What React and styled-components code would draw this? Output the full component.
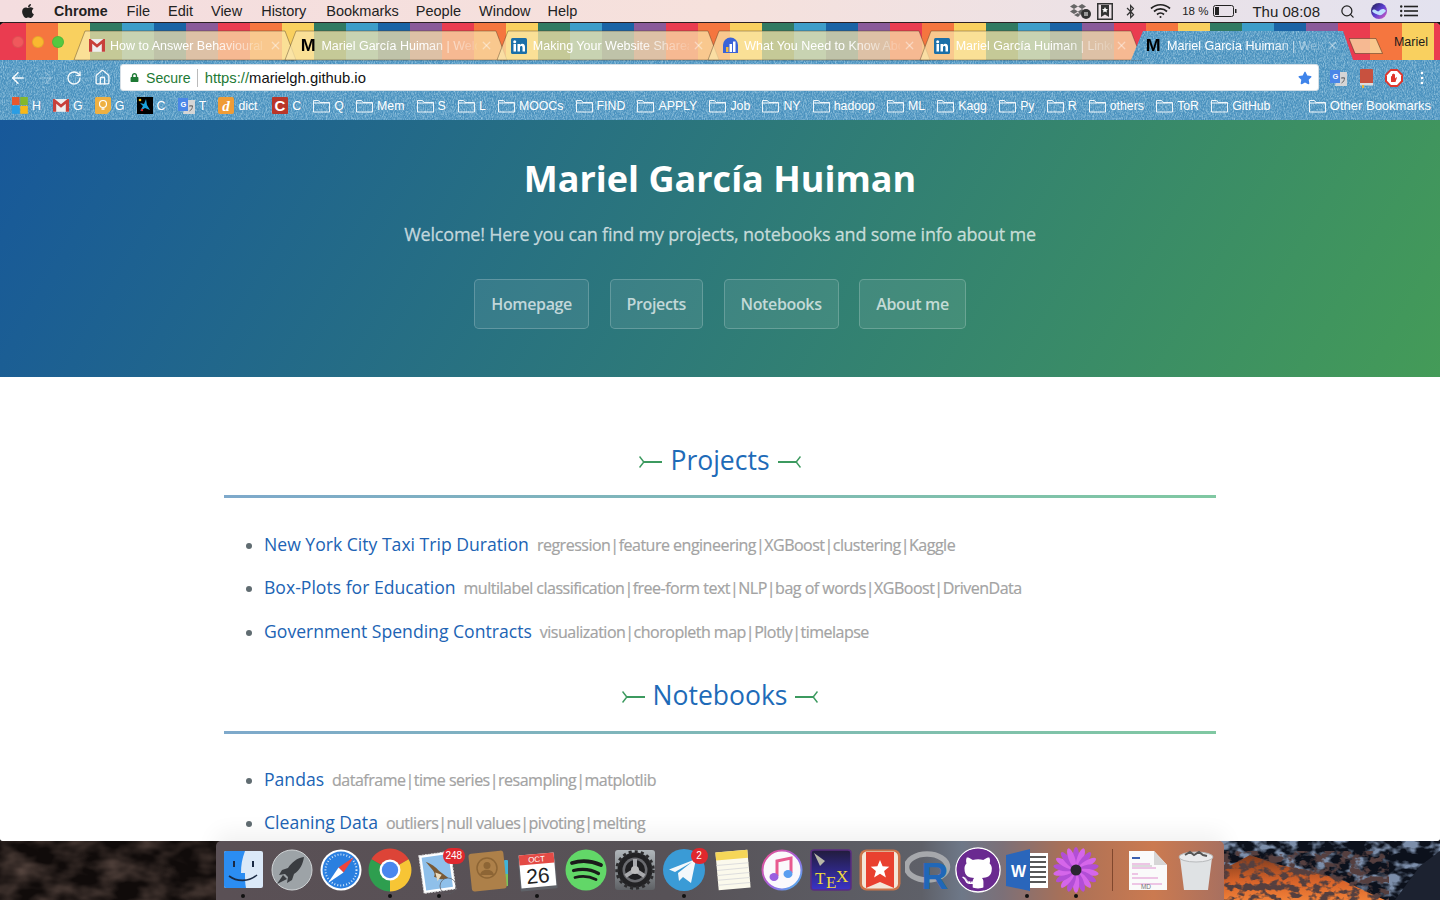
import React from "react";
import styled, { createGlobalStyle } from "styled-components";
import { FaApple, FaBluetoothB, FaGithub, FaStar, FaLock } from "react-icons/fa";
import { Search, ArrowLeft, ArrowRight, RotateCw, Home, X } from "lucide-react";

const denimSvg = `<svg xmlns='http://www.w3.org/2000/svg' width='500' height='200'><filter id='a' x='0' y='0' width='100%' height='100%'><feTurbulence type='fractalNoise' baseFrequency='1.1 .45' numOctaves='2' seed='4' stitchTiles='stitch'/><feColorMatrix values='0 0 0 0 .55 0 0 0 0 .77 0 0 0 0 .89 1.3 0 0 0 -.52'/></filter><filter id='b' x='0' y='0' width='100%' height='100%'><feTurbulence type='fractalNoise' baseFrequency='.95 .5' numOctaves='2' seed='9' stitchTiles='stitch'/><feColorMatrix values='0 0 0 0 .16 0 0 0 0 .42 0 0 0 0 .63 1.5 0 0 0 -.58'/></filter><rect width='500' height='200' fill='#478fbd'/><rect width='500' height='200' filter='url(#b)'/><rect width='500' height='200' filter='url(#a)'/></svg>`;
const denim = `url("data:image/svg+xml,${encodeURIComponent(denimSvg)}")`;

const Global = createGlobalStyle`
  html, body { margin: 0; padding: 0; height: 100%; overflow: hidden; background: #111; }
  #root { height: 100%; }
  * { box-sizing: border-box; }
`;

const Screen = styled.div`
  width: 1440px; height: 900px; display: flex; flex-direction: column;
  position: relative; overflow: hidden; font-family: "Liberation Sans", Arial, sans-serif;
  background: #120d0c;
`;

/* ---------- menu bar ---------- */
const MenuBar = styled.header`
  height: 22px; flex: none; display: flex; align-items: center; padding: 0 22px 0 20px;
  background: linear-gradient(90deg, #f4dddf 0%, #f6e1dc 50%, #e3e2ef 100%);
  color: #222; font-size: 14.5px;
`;
const MenuItem = styled.span`
  margin-left: ${p => p.$gap}px; font-weight: ${p => (p.$bold ? 700 : 400)}; white-space: nowrap; line-height: 22px;
  ${p => p.$bold && "font-size: 14.2px;"}
`;
const Status = styled.span`
  display: flex; align-items: center; margin-left: ${p => p.$gap}px; font-size: ${p => p.$size || 13}px; color: #222; white-space: nowrap;
`;
const StatusGroup = styled.div`margin-left: auto; display: flex; align-items: center;`;

/* ---------- browser window ---------- */
const Window = styled.main`
  flex: 1; min-height: 0; display: flex; flex-direction: column; overflow: hidden;
  border-radius: 5px 5px 4px 4px; border-top: 1px solid #2b2023; border-bottom: 1px solid #555;
  background: #fff;
`;
const TabStrip = styled.div`
  height: 37px; flex: none; display: flex; align-items: flex-end; padding-left: 74px; position: relative;
  background-color: #ea3c50;
  background-image: repeating-linear-gradient(90deg,
    #ea3c50 0 32px, #f5763f 32px 64px, #f9d05f 64px 96px, #317a62 96px 128px,
    #3d9dc9 128px 160px, #1a63a5 160px 192px, #8a5a9a 192px 224px);
  background-position: -6px 0;
`;
const Lights = styled.div`position: absolute; left: 12px; top: 13px; display: flex; gap: 8px;`;
const Light = styled.i`
  width: 12px; height: 12px; border-radius: 50%; display: block; background: ${p => p.$c}; border: 1px solid rgba(0,0,0,.08);
`;
const Tab = styled.div`
  width: 222px; height: 29px; flex: none; position: relative; display: flex; align-items: center;
  padding: 0 14px 0 14px; color: #fff; font-size: 12.5px;
  & + & { margin-left: -10.6px; }
  ${p => p.$active && `z-index: 2;`}
`;
const TabShape = styled.svg`position: absolute; inset: 0; width: 100%; height: 100%; overflow: visible;`;
const ActiveFill = styled.div`
  position: absolute; inset: 0; background-image: ${denim};
  clip-path: polygon(0 100%, 12px 0, 212px 0, 100% 100%);
`;
const TabFav = styled.span`position: relative; width: 17px; height: 16px; flex: none; display: flex; align-items: center; justify-content: center;`;
const TabTitle = styled.span`
  position: relative; margin-left: 5px; width: 156px; white-space: nowrap; overflow: hidden;
  -webkit-mask-image: linear-gradient(90deg, #000 66%, rgba(0,0,0,.12) 100%);
  mask-image: linear-gradient(90deg, #000 66%, rgba(0,0,0,.12) 100%);
`;
const TabClose = styled.span`position: absolute; right: 14px; top: 8px; display: flex; color: rgba(255,255,255,.42);`;
const NewTab = styled.svg`margin-left: -4px; margin-bottom: 6px; flex: none;`;
const Profile = styled.span`position: absolute; right: 12px; top: 12px; color: #1b1b1b; font-size: 12.5px;`;
const MText = styled.span`font: 700 17px/16px "Liberation Sans", sans-serif; color: #000; transform: scaleX(1.05);`;

const DenimBar = styled.div`background-image: ${denim}; flex: none;`;
const Toolbar = styled.div`height: 33px; display: flex; align-items: center; padding: 2px 0 0 9px; color: #fff;`;
const NavBtn = styled.span`width: ${p => p.$w || 28}px; display: flex; align-items: center; justify-content: flex-start; opacity: ${p => p.$dim ? .25 : .95};`;
const Omnibox = styled.div`
  width: 1199px; height: 27px; background: #fff; border-radius: 3px; border: 1px solid #d6dfe6;
  display: flex; align-items: center; padding: 0 6px 0 9px; font-size: 14.8px; color: #111;
`;
const Secure = styled.span`color: #1e7a35; margin-left: 7px; padding-right: 6px; border-right: 1px solid #bbb; line-height: 18px; font-size: 14.1px;`;
const Url = styled.span`margin-left: 7px;`;
const UrlScheme = styled.span`color: #1e7a35;`;
const StarBtn = styled.span`margin-left: auto; display: flex; color: #3f84ea;`;
const Ext = styled.span`display: flex; width: ${p => p.$w}px; justify-content: center; align-items: center;`;
const ExtRow = styled.div`display: flex; align-items: center; margin-left: 4px;`;

const Bookmarks = styled.nav`
  height: 27px; display: flex; align-items: center; padding: 0 9px 2px 12px; gap: 12.2px; color: #fff; font-size: 12.3px;
`;
const Bookmark = styled.span`
  display: flex; align-items: center; gap: 4px; white-space: nowrap;
  ${p => p.$end && "margin-left: auto; font-size: 13px;"}
  ${p => p.$pad && `padding-right: ${p.$pad}px;`}
`;
const Folder = () => (
  <svg width="17" height="14" viewBox="0 0 17 14" fill="none" stroke="#fff" strokeWidth="1" opacity=".9">
    <path d="M.5 13V1.500h5l1.500 2h9.500V13z" /><path d="M.5 4h16" />
  </svg>
);

/* ---------- page ---------- */
const Scroll = styled.div`flex: 1; min-height: 0; overflow: hidden; background: #fff; font-family: "Open Sans", sans-serif;`;
const Hero = styled.section`
  height: 257px; padding-top: 35px; text-align: center; color: #fff;
  background: linear-gradient(120deg, #17589a, #449b58);
`;
const Title = styled.h1`margin: 0; font-size: 36px; line-height: 48px; font-weight: 700;`;
const Tagline = styled.p`margin: 19px 0 0; font-size: 18px; line-height: 24px; font-weight: 500; letter-spacing: -.2px; color: rgba(255,255,255,.7); -webkit-text-stroke: .3px rgba(255,255,255,.55);`;
const Buttons = styled.div`display: flex; justify-content: center; gap: 20.6px; margin-top: 33px;`;
const Btn = styled.a`
  height: 50px; padding: 0 16px; display: flex; align-items: center; border-radius: 4.8px; font-size: 16px; font-weight: 600; letter-spacing: -.36px;
  color: rgba(255,255,255,.7); background: rgba(255,255,255,.08); border: 1px solid rgba(255,255,255,.2);
`;
const Main = styled.div`width: 992px; margin: 0 auto; padding-top: 64px; color: #606c71;`;
const Heading = styled.h2`
  margin: ${p => p.$first ? 0 : "30px"} 0 0; height: 38px; display: flex; align-items: center; justify-content: center; gap: 8px;
  font-size: 26.500px; font-weight: 400; color: #1e6bb8;
`;
const Rule = styled.div`
  height: 3px; margin-top: ${p => p.$mt}px;
  background: linear-gradient(90deg, #7ea9cb, #80c8a2);
`;
const List = styled.ul`margin: ${p => p.$mt}px 0 0; padding: 0 0 0 40px; list-style: disc;`;
const Item = styled.li`line-height: 27px; & + & { margin-top: 15.4px; }`;
const ItemLink = styled.a`color: #2063b4; font-size: 17.6px; margin-right: 8px;`;
const Tags = styled.span`color: #a3a3a3; font-size: 16px; letter-spacing: -.5px; -webkit-text-stroke: .2px #a3a3a3;`;
const HeadMark = ({ flip }) => (
  <svg width="23" height="14" viewBox="0 0 23 14" fill="none" stroke="#3c9a5f" strokeWidth="2" style={{ marginTop: 4 }}>
    {flip ? <><path d="M0 7h18" /><path d="M22.500 1.500 18.200 7l4.300 5.500" strokeWidth="1.500" /></> : <><path d="M5 7h18" /><path d="M.5 1.500 4.800 7 .5 12.500" strokeWidth="1.500" /></>}
  </svg>
);

/* ---------- desktop + dock ---------- */
const Desktop = styled.footer`height: 59px; flex: none; position: relative; display: flex; justify-content: center; margin-top: -1px;`;
const Wallpaper = styled.svg`position: absolute; inset: 0; width: 100%; height: 100%;`;
const Dock = styled.div`
  position: relative; width: 1008px; height: 59px; padding-left: 2.500px; display: flex; align-items: flex-start; padding-top: 5px;
  border-radius: 5px 5px 0 0;
  background: linear-gradient(90deg, #5a5055 0%, #575257 45%, #5e6068 70%, #6e7888 74%, #7c7078 78%, #a87058 84%, #cb7a50 93%, #a87060 100%);
  box-shadow: 0 -8px 22px rgba(0,0,0,.06);
`;
const Slot = styled.div`position: relative; width: 49px; height: 48px; flex: none; display: flex; justify-content: center;`;
const Dot = styled.i`position: absolute; left: 50%; margin-left: -2px; top: 47.500px; width: 4px; height: 4px; border-radius: 50%; background: #111;`;
const Badge = styled.span`
  position: absolute; top: 2px; left: ${p => p.$l}px; height: 16px; min-width: 17px; padding: 0 3px; border-radius: 8px;
  background: #e0282e; color: #fff; font: 10px/16px "Liberation Sans", sans-serif; text-align: center;
`;
const Sep = styled.div`width: 1px; height: 42px; margin: 3px 10px 0 11px; background: rgba(90,40,20,.6); flex: none;`;

const Ico = ({ children, s = 48, vb = 48 }) => <svg width={s} height={s} viewBox={`0 0 ${vb} ${vb}`}>{children}</svg>;

const Finder = () => <Ico>
  <rect x="5" y="5" width="39" height="37" rx="2" fill="#dbe9f8" />
  <path d="M7 5h19c-3 8-4 14-4 22h4c0 6 0 10 1 15H7a2 2 0 0 1-2-2V7a2 2 0 0 1 2-2z" fill="#2b8df2" />
  <path d="M15 15v6M34 15v6" stroke="#1a2a44" strokeWidth="2" /><path d="M10 30c8 6 20 6 28-1" stroke="#1a2a44" strokeWidth="1.600" fill="none" />
</Ico>;
const Launchpad = () => <Ico>
  <circle cx="24" cy="24" r="20" fill="#9da3a7" stroke="#d0d4d6" strokeWidth="1" />
  <path d="M36 11c-7 1-12 5-16 11l-6 2-3 5 6-1 3 3-1 6 5-3 2-6c6-4 9-10 10-17z" fill="#3a3d41" />
  <path d="M15 29l-6 9 10-5z" fill="#3a3d41" />
</Ico>;
const Safari = () => <Ico>
  <circle cx="24" cy="24" r="20.500" fill="#fff" /><circle cx="24" cy="24" r="18.500" fill="#2a7fe0" />
  <circle cx="24" cy="24" r="15.500" fill="none" stroke="#cfe4fa" strokeWidth="2" strokeDasharray="1 2" />
  <path d="M37 11 21.500 21.500 26.500 26.500z" fill="#f0443a" /><path d="M11 37 21.500 21.500 26.500 26.500z" fill="#fff" />
</Ico>;
const Chrome = () => <Ico>
  <path d="M24 24 5.400 13.300A21.500 21.500 0 0 1 42.600 13.300z" fill="#dd4437" />
  <path d="M24 24 42.600 13.300A21.500 21.500 0 0 1 24 45.500z" fill="#f7c535" />
  <path d="M24 24 24 45.500A21.500 21.500 0 0 1 5.400 13.300z" fill="#2e9e4f" />
  <circle cx="24" cy="24" r="10.500" fill="#fff" /><circle cx="24" cy="24" r="8.200" fill="#4a87ee" />
</Ico>;
const Mail = () => <Ico>
  <g transform="rotate(-8 24 24)">
    <rect x="6" y="7" width="32" height="38" fill="#fff" stroke="#ddd" strokeDasharray="2 1" />
    <rect x="8.500" y="9.500" width="27" height="33" fill="#8fc0ea" />
    <path d="M12 14c5 3 9 6 12 11l8 8c-3 1-8 1-10-1l-4-2c2-2 1-5-1-8z" fill="#7a5a34" />
    <path d="M20 26l6 3-5 6z" fill="#e8dcc0" />
  </g>
  <circle cx="33" cy="40" r="8" fill="none" stroke="#5a5a5f" strokeWidth="1" opacity=".7" />
</Ico>;
const Contacts = () => <Ico>
  <rect x="40" y="14" width="4" height="25" rx="1" fill="#3fb3d8" /><rect x="40" y="28" width="4" height="12" fill="#7cc35a" />
  <g transform="rotate(-6 24 24)"><rect x="6" y="6" width="35" height="38" rx="3" fill="#ad8049" /></g>
  <circle cx="23" cy="22" r="10" fill="none" stroke="#8d6535" strokeWidth="1.500" /><circle cx="23" cy="19.500" r="3.500" fill="#8d6535" /><path d="M16 29c1-7 13-7 14 0z" fill="#8d6535" />
</Ico>;
const Calendar = () => <Ico>
  <g transform="rotate(-5 24 24)">
    <rect x="6" y="9" width="37" height="35" rx="1" fill="#5f6268" /><rect x="7" y="8" width="35" height="33" fill="#fff" /><rect x="7" y="8" width="35" height="10" fill="#e34a45" />
    <text x="24.500" y="16" textAnchor="middle" fill="#fff" fontSize="8" fontFamily="Liberation Sans">OCT</text>
    <text x="24.500" y="37" textAnchor="middle" fill="#222" fontSize="21" fontFamily="Liberation Sans">26</text>
  </g>
</Ico>;
const Spotify = () => <Ico>
  <circle cx="24" cy="24" r="20.500" fill="#62d768" />
  <g fill="none" stroke="#1a1a1a" strokeLinecap="round"><path d="M10 17c10-3 20-2 29 2" strokeWidth="3.800" /><path d="M11.500 24.500c9-2 18-1 25 3" strokeWidth="3.200" /><path d="M13 31.500c8-2 15-1 21 2" strokeWidth="2.800" /></g>
</Ico>;
const Prefs = () => <Ico>
  <defs><linearGradient id="pfb" x1="0" y1="0" x2="0" y2="1"><stop offset="0" stopColor="#b0b6ba" /><stop offset="1" stopColor="#5f6266" /></linearGradient></defs>
  <rect x="4" y="4" width="40" height="40" rx="3" fill="url(#pfb)" />
  <circle cx="24" cy="24" r="17.500" fill="#222224" /><circle cx="24" cy="24" r="18" fill="none" stroke="#2c2c2e" strokeWidth="3.500" strokeDasharray="3 3" />
  <circle cx="24" cy="24" r="12.500" fill="#6a6b6f" /><circle cx="24" cy="24" r="10" fill="#1f1f21" />
  <g stroke="#a9aaad" strokeWidth="4"><path d="M24 24V13M24 24l9.500 6M24 24l-9.500 6" /></g><circle cx="24" cy="24" r="4" fill="#bbb" />
</Ico>;
const Telegram = () => <Ico>
  <circle cx="24" cy="24" r="21" fill="#3a9bd6" />
  <path d="M9 23.500 36 13l-5 24-8-6-4 4-1-8 14-11-17 10z" fill="#f4f8fb" />
</Ico>;
const Notes = () => <Ico>
  <g transform="rotate(-5 24 24)"><rect x="8" y="5" width="32" height="38" fill="#fbf9ec" /><rect x="8" y="5" width="32" height="8" fill="#f5d658" />
    <path d="M8 18h32M8 23h32M8 28h32M8 33h32M8 38h32" stroke="#ddd" strokeWidth="1" /></g>
</Ico>;
const ITunes = () => <Ico>
  <defs><linearGradient id="itr" x1="0" y1="0" x2="1" y2="1"><stop offset="0" stopColor="#f0508a" /><stop offset=".55" stopColor="#a060e0" /><stop offset="1" stopColor="#40c0f0" /></linearGradient></defs>
  <circle cx="24" cy="24" r="19.500" fill="#fbf9fc" stroke="url(#itr)" strokeWidth="2" />
  <path d="M19 30V15l14-3v15" fill="none" stroke="#e85a90" strokeWidth="3" />
  <ellipse cx="16" cy="31" rx="4.500" ry="4" fill="#9a60e0" /><ellipse cx="30" cy="28" rx="4.500" ry="4" fill="#5a9ef0" />
</Ico>;
const Tex = () => <Ico>
  <defs><linearGradient id="txb" x1="0" y1="0" x2="0" y2="1"><stop offset="0" stopColor="#221c3c" /><stop offset="1" stopColor="#3a33c8" /></linearGradient></defs>
  <rect x="4" y="4" width="40" height="40" rx="3" fill="url(#txb)" stroke="#5a2d80" strokeWidth="1.500" />
  <path d="M7 7l6 13 5-5z" fill="#b8b8a8" />
  <text x="8" y="38" fontSize="17" fill="#f1dc3c" fontFamily="Liberation Serif">T</text><text x="19" y="42" fontSize="17" fill="#f1dc3c" fontFamily="Liberation Serif">E</text><text x="29" y="36" fontSize="17" fill="#f1dc3c" fontFamily="Liberation Serif">X</text>
</Ico>;
const Wunder = () => <Ico>
  <rect x="3.500" y="3.500" width="41" height="41" rx="7" fill="#c9744a" /><rect x="6" y="5.500" width="36" height="37" rx="5" fill="#f4e6d8" />
  <path d="M10 6h28v36l-14-6-14 6z" fill="#e9402f" />
  <path d="M24 14l2.600 6.300 6.700.4-5.200 4.200 1.800 6.500L24 27.800l-5.900 3.600 1.800-6.500-5.200-4.200 6.700-.4z" fill="#fff" />
</Ico>;
const RLang = () => <Ico>
  <ellipse cx="22" cy="21" rx="20.500" ry="13" fill="none" stroke="#a6a8ac" strokeWidth="5.500" />
  <text x="16.500" y="42.500" fontSize="37" fontWeight="700" fill="#2067b8" fontFamily="Liberation Sans">R</text>
</Ico>;
const GitHub = () => <Ico>
  <circle cx="24" cy="24" r="22" fill="#6a2a90" stroke="#fff" strokeWidth="1.500" />
  <circle cx="24" cy="24" r="18.500" fill="#fff" />
  <foreignObject x="2" y="2" width="44" height="44"><FaGithub size={44} color="#6a2a90" /></foreignObject>
</Ico>;
const Word = () => <Ico>
  <rect x="24" y="7" width="21" height="35" fill="#fff" />
  <path d="M26 11h17M26 16h17M26 21h17M26 26h17M26 31h17M26 36h17" stroke="#222" strokeWidth="1.500" />
  <path d="M3 9 27 3v42L3 40z" fill="#2a66bb" />
  <text x="8" y="31" fontSize="16" fontWeight="700" fill="#fff" fontFamily="Liberation Sans">W</text>
</Ico>;
const Flower = () => <Ico>
  {Array.from({ length: 18 }, (_, i) => <ellipse key={i} cx="24" cy="11" rx="3.200" ry="10" fill={i % 2 ? "#d566ea" : "#b24ed6"} transform={`rotate(${i * 20} 24 24)`} />)}
  <circle cx="24" cy="24" r="5.500" fill="#2a2530" />
</Ico>;
const FileDoc = () => <Ico>
  <path d="M6 5h25l13 14v25H6z" fill="#fafafa" /><path d="M31 5v14h13z" fill="#d6d6d6" />
  <path d="M9 12h8" stroke="#3a5fb0" strokeWidth="2" />
  <path d="M9 18h18M9 22h24M9 28h6M9 32h26M9 38h30" stroke="#e090d0" strokeWidth="1" /><path d="M9 20h20" stroke="#bbb" strokeWidth="1" />
  <text x="23" y="43" fontSize="6.500" textAnchor="middle" fill="#777" fontFamily="Liberation Sans">MD</text>
</Ico>;
const Trash = () => <Ico>
  <path d="M8 12h32l-4 32H12z" fill="#dfe2e4" />
  <ellipse cx="24" cy="11" rx="17" ry="5" fill="#e9eaec" stroke="#b8babc" />
  <path d="M13 9l5-3 4 3 5-3 4 3 4 1" stroke="#555" strokeWidth="2" fill="none" />
</Ico>;

const Gmail = ({ s = 16 }) => (
  <svg width={s} height={s * .8} viewBox="0 0 20 16"><rect width="20" height="16" fill="#eee" /><path d="M0 0v16h4V6l6 5 6-5v10h4V0h-2l-8 6.500L2 0z" fill="#c8403a" /></svg>
);
const Linked = () => (
  <svg width="16" height="16" viewBox="0 0 16 16"><rect width="16" height="16" rx="1.500" fill="#1b6fa8" /><rect x="2.500" y="6" width="2.500" height="7.500" fill="#fff" /><circle cx="3.700" cy="3.700" r="1.500" fill="#fff" /><path d="M6.500 6H9v1c.5-.8 1.300-1.200 2.300-1.200 2 0 2.700 1.300 2.700 3.200v4.500h-2.500V9.500c0-1-.3-1.600-1.200-1.600S9 8.600 9 9.500v4H6.500z" fill="#fff" /></svg>
);
const Analytics = () => (
  <svg width="17" height="17" viewBox="0 0 17 17"><path d="M1 16V8a7.500 7.500 0 0 1 15 0v8z" fill="#3a63d8" /><rect x="4" y="10" width="2.500" height="5" fill="#f4b83a" /><rect x="7.500" y="7" width="2.500" height="8" fill="#fff" /><rect x="11" y="4.500" width="2.500" height="10.500" fill="#fff" /></svg>
);
const Msoft = () => (
  <svg width="16" height="17" viewBox="0 0 16 17"><rect width="7.500" height="8" fill="#e8582e" /><rect x="8.300" width="7.500" height="8" fill="#84b82c" /><rect y="8.800" width="7.500" height="8" fill="#2a9de4" /><rect x="8.300" y="8.800" width="7.500" height="8" fill="#f8b818" /></svg>
);
const Keep = () => (
  <svg width="16" height="17" viewBox="0 0 16 17"><path d="M0 1.500A1.500 1.500 0 0 1 1.500 0h13A1.500 1.500 0 0 1 16 1.500V13l-4 4H1.500A1.500 1.500 0 0 1 0 15.500z" fill="#eeb042" /><circle cx="8" cy="7" r="3.500" fill="none" stroke="#fff" strokeWidth="1.200" /><path d="M6.500 12h3" stroke="#fff" strokeWidth="1.300" /></svg>
);
const Caixa = () => (
  <svg width="16" height="17" viewBox="0 0 16 17"><rect width="16" height="17" fill="#000" /><path d="M9 2 7 7 3 6l3 3-3 5 5-3 5 2-3-5z" fill="#1aa0dc" /><circle cx="3" cy="3" r="1.300" fill="#f6c112" /><circle cx="5" cy="13" r="1.200" fill="#d2232a" /></svg>
);
const Translate = () => (
  <svg width="17" height="18" viewBox="0 0 17 18"><path d="M7 3h10v14H5z" fill="#d5d5d5" /><path d="M0 1h10v13H0z" fill="#4a86e8" /><text x="2.500" y="10" fontSize="7.500" fontWeight="700" fill="#fff" fontFamily="Liberation Sans">G</text><path d="M11 9h4M13 8v1M11.500 14c2-1 3-3 3-5" stroke="#666" fill="none" /></svg>
);
const Dict = () => (
  <svg width="16" height="17" viewBox="0 0 16 17"><rect width="16" height="17" rx="2" fill="#ef9c36" /><text x="8" y="14" textAnchor="middle" fontSize="15" fontWeight="700" fontStyle="italic" fill="#fff" fontFamily="Liberation Serif">d</text></svg>
);
const RedC = () => (
  <svg width="16" height="17" viewBox="0 0 16 17"><rect width="16" height="17" rx="1" fill="#ba3629" /><text x="8" y="14" textAnchor="middle" fontSize="15" fontWeight="700" fill="#fff" fontFamily="Liberation Sans">C</text></svg>
);
const RedBook = () => (
  <svg width="15" height="20" viewBox="0 0 15 20"><rect x="1" y="1" width="13" height="16" rx="1" fill="#c8513f" /><rect x="1" y="15" width="13" height="2.500" fill="#ddd" /><rect x="3" y="17" width="2" height="3" fill="#e8b33a" /></svg>
);
const StopExt = () => (
  <svg width="18" height="18" viewBox="0 0 18 18"><path d="M5.500 0h7L18 5.500v7L12.500 18h-7L0 12.500v-7z" fill="#e0352b" /><path d="M2 6.200 6 2h6l4 4.200v5.600L12 16H6l-4-4.200z" fill="#fff" /><path d="M6 13V7.500c0-.8 1-.8 1 0V5.500c0-.8 1-.8 1 0V5c0-.8 1-.8 1 0v.5c0-.8 1-.8 1 0v4l1-1c.6-.5 1.200 0 .8.600L10.500 13z" fill="#e0352b" /></svg>
);

const tabs = [
  { icon: <Gmail />, title: "How to Answer Behavioural Questions" },
  { icon: <MText>M</MText>, title: "Mariel García Huiman | Welcome" },
  { icon: <Linked />, title: "Making Your Website Shareable" },
  { icon: <Analytics />, title: "What You Need to Know About" },
  { icon: <Linked />, title: "Mariel García Huiman | LinkedIn" },
  { icon: <MText>M</MText>, title: "Mariel García Huiman | Welcome", active: true },
];

const bookmarks = [
  [<Msoft />, "H"], [<Gmail />, "G"], [<Keep />, "G"], [<Caixa />, "C"], [<Translate />, "T"], [<Dict />, "dict", 2.5], [<RedC />, "C"],
  ...["Q", "Mem", "S", "L", "MOOCs", "FIND", "APPLY", "Job", "NY", "hadoop", "ML", "Kagg", "Py", "R", "others", "ToR", "GitHub"].map(t => [<Folder />, t]),
];

const dock = [
  { I: Finder, dot: 1 }, { I: Launchpad }, { I: Safari }, { I: Chrome, dot: 1 },
  { I: Mail, dot: 1, badge: "248", l: 28 }, { I: Contacts }, { I: Calendar, dot: 1 }, { I: Spotify }, { I: Prefs },
  { I: Telegram, dot: 1, badge: "2", l: 31 }, { I: Notes }, { I: ITunes }, { I: Tex }, { I: Wunder }, { I: RLang }, { I: GitHub },
  { I: Word, dot: 1 }, { I: Flower, dot: 1 },
];

const projects = [
  ["New York City Taxi Trip Duration", "regression|feature engineering|XGBoost|clustering|Kaggle"],
  ["Box-Plots for Education", "multilabel classification|free-form text|NLP|bag of words|XGBoost|DrivenData"],
  ["Government Spending Contracts", "visualization|choropleth map|Plotly|timelapse"],
];
const notebooks = [
  ["Pandas", "dataframe|time series|resampling|matplotlib"],
  ["Cleaning Data", "outliers|null values|pivoting|melting"],
];

const Entries = ({ rows, mt }) => (
  <List $mt={mt}>
    {rows.map(([a, b]) => <Item key={a}><ItemLink>{a}</ItemLink><Tags>{b}</Tags></Item>)}
  </List>
);

export default function App() {
  return (
    <Screen>
      <Global />
      <MenuBar>
        <FaApple size={16} color="#222" />
        <MenuItem $gap={18} $bold>Chrome</MenuItem>
        {[["File", 19], ["Edit", 18], ["View", 18], ["History", 19], ["Bookmarks", 20], ["People", 17], ["Window", 18], ["Help", 17]].map(([t, g]) => <MenuItem key={t} $gap={g}>{t}</MenuItem>)}
        <StatusGroup>
          <Status>
            <svg width="21" height="16" viewBox="0 0 21 16"><g fill="#666"><path d="M4 1l4 2.500L4 6 0 3.500zM12 1l4 2.500L12 6 8 3.500zM4 6l4 2.500L4 11 0 8.500zM12 6l3 2-5 4-2-3.500zM8 10l2 2-2 2-4-2z" /></g><circle cx="16" cy="11" r="5" fill="#333" /><path d="M15 9v4M17 9v4" stroke="#fff" /></svg>
          </Status>
          <Status $gap={6}>
            <svg width="16" height="17" viewBox="0 0 16 17"><rect x=".75" y=".75" width="14.500" height="15.500" fill="none" stroke="#333" strokeWidth="1.500" /><path d="M4 2h8v12l-4-2.500L4 14z" fill="#333" /><path d="M8 4l1 2 2 .2-1.500 1.400.4 2L8 8.600 6.100 9.600l.4-2L5 6.200 7 6z" fill="#fff" /></svg>
          </Status>
          <Status $gap={10}><FaBluetoothB size={15} color="#333" /></Status>
          <Status $gap={12}>
            <svg width="21" height="16" viewBox="0 0 21 16" fill="none" stroke="#222" strokeWidth="1.700"><path d="M1 5.500c5.500-5 13.500-5 19 0M4 8.500c3.700-3.400 9.300-3.400 13 0M7 11.500c2-1.800 5-1.800 7 0" /><circle cx="10.500" cy="14" r="1" fill="#222" stroke="none" /></svg>
          </Status>
          <Status $gap={11} $size={11.500}>18 %</Status>
          <Status $gap={5}>
            <svg width="24" height="12" viewBox="0 0 24 12"><rect x=".5" y=".5" width="20" height="11" rx="2" fill="none" stroke="#222" /><rect x="2" y="2" width="4" height="8" fill="#222" /><rect x="22" y="4" width="1.500" height="4" fill="#222" /></svg>
          </Status>
          <Status $gap={15} $size={15}>Thu 08:08</Status>
          <Status $gap={20}><Search size={15} color="#222" strokeWidth={2} /></Status>
          <Status $gap={16}>
            <svg width="16" height="16" viewBox="0 0 16 16"><defs><linearGradient id="siri" x1="0" y1="0" x2="1" y2="1"><stop offset="0" stopColor="#1a1a4a" /><stop offset=".5" stopColor="#5a3fd0" /><stop offset="1" stopColor="#e060c0" /></linearGradient></defs><circle cx="8" cy="8" r="8" fill="url(#siri)" /><path d="M1 8c3-4 5 2 7 0s5-3 7 0c-3 3-5 5-7 4S3 11 1 8z" fill="#bfe0ff" /></svg>
          </Status>
          <Status $gap={13}>
            <svg width="18" height="12" viewBox="0 0 18 12"><g fill="#222"><circle cx="1.200" cy="1.500" r="1.200" /><circle cx="1.200" cy="6" r="1.200" /><circle cx="1.200" cy="10.500" r="1.200" /><rect x="4" y=".7" width="14" height="1.600" /><rect x="4" y="5.200" width="14" height="1.600" /><rect x="4" y="9.700" width="14" height="1.600" /></g></svg>
          </Status>
        </StatusGroup>
      </MenuBar>

      <Window>
        <TabStrip>
          <Lights>
            <Light $c="#f0585c" /><Light $c="#fab830" /><Light $c="#55c840" />
          </Lights>
          {tabs.map((t, i) => (
            <Tab key={i} $active={t.active}>
              {t.active
                ? <ActiveFill />
                : <TabShape viewBox="0 0 222 29" preserveAspectRatio="none"><polygon points="0,29 11,0 211,0 222,29" fill="rgba(250,230,170,.74)" stroke="rgba(70,50,30,.5)" strokeWidth=".8" /></TabShape>}
              <TabFav>{t.icon}</TabFav>
              <TabTitle>{t.title}</TabTitle>
              <TabClose><X size={13} strokeWidth={2.400} /></TabClose>
            </Tab>
          ))}
          <NewTab width="34" height="16" viewBox="0 0 34 16"><polygon points="0,0.500 27,0.500 33.500,15.500 6,15.500" fill="rgba(250,230,170,.74)" stroke="rgba(70,50,30,.5)" /></NewTab>
          <Profile>Mariel</Profile>
        </TabStrip>

        <DenimBar>
          <Toolbar>
            <NavBtn><ArrowLeft size={18} strokeWidth={2} /></NavBtn>
            <NavBtn $dim $w={29}><ArrowRight size={18} strokeWidth={2} /></NavBtn>
            <NavBtn><RotateCw size={16} strokeWidth={2} /></NavBtn>
            <NavBtn $w={26}><Home size={17} strokeWidth={1.800} /></NavBtn>
            <Omnibox>
              <FaLock size={9} color="#1e7a35" />
              <Secure>Secure</Secure>
              <Url><UrlScheme>https://</UrlScheme>marielgh.github.io</Url>
              <StarBtn><FaStar size={14} /></StarBtn>
            </Omnibox>
            <ExtRow>
              <Ext $w={30}><Translate /></Ext>
              <Ext $w={26}><RedBook /></Ext>
              <Ext $w={30}><StopExt /></Ext>
              <Ext $w={26}><svg width="4" height="14" viewBox="0 0 4 14" fill="#fff"><circle cx="2" cy="2" r="1.300" /><circle cx="2" cy="7" r="1.300" /><circle cx="2" cy="12" r="1.300" /></svg></Ext>
            </ExtRow>
          </Toolbar>
          <Bookmarks>
            {bookmarks.map(([icon, t, pad], i) => <Bookmark key={i} $pad={pad}>{icon}{t}</Bookmark>)}
            <Bookmark $end><Folder />Other Bookmarks</Bookmark>
          </Bookmarks>
        </DenimBar>

        <Scroll>
          <Hero>
            <Title>Mariel García Huiman</Title>
            <Tagline>Welcome! Here you can find my projects, notebooks and some info about me</Tagline>
            <Buttons>
              {["Homepage", "Projects", "Notebooks", "About me"].map(b => <Btn key={b}>{b}</Btn>)}
            </Buttons>
          </Hero>
          <Main>
            <Heading $first><HeadMark />Projects<HeadMark flip /></Heading>
            <Rule $mt={16} />
            <Entries rows={projects} mt={33} />
            <Heading><HeadMark />Notebooks<HeadMark flip /></Heading>
            <Rule $mt={17} />
            <Entries rows={notebooks} mt={32} />
          </Main>
        </Scroll>
      </Window>

      <Desktop>
        <Wallpaper viewBox="0 0 1440 59" preserveAspectRatio="none">
          <defs>
            <filter id="rock" x="0" y="0" width="100%" height="100%"><feTurbulence type="fractalNoise" baseFrequency=".03 .05" numOctaves="3" seed="3" /><feColorMatrix values="0 0 0 0 .17 0 0 0 0 .11 0 0 0 0 .09 1.300 0 0 0 -.48" /></filter>
            <filter id="snow" x="0" y="0" width="100%" height="100%"><feTurbulence type="fractalNoise" baseFrequency=".06 .09" numOctaves="3" seed="11" /><feColorMatrix values="0 0 0 0 .2 0 0 0 0 .27 0 0 0 0 .4 5 0 0 0 -2.300" /></filter>
            <filter id="fire" x="0" y="0" width="100%" height="100%"><feTurbulence type="fractalNoise" baseFrequency=".1 .14" numOctaves="3" seed="5" /><feColorMatrix values="0 0 0 0 .09 0 0 0 0 .05 0 0 0 0 .05 6 0 0 0 -2.700" /></filter>
            <linearGradient id="flame" x1="0" y1="0" x2="0" y2="1"><stop offset="0" stopColor="#7a3a1e" /><stop offset=".6" stopColor="#d9642a" /><stop offset="1" stopColor="#f08038" /></linearGradient>
          </defs>
          <rect width="1440" height="59" fill="#100b0a" />
          <rect width="300" height="59" filter="url(#rock)" />
          <rect x="1220" width="220" height="59" fill="#0c111c" />
          <rect x="1220" width="220" height="59" filter="url(#snow)" />
          <polygon points="1224,28 1250,14 1280,24 1310,30 1340,38 1365,50 1385,59 1224,59" fill="url(#flame)" />
          <rect x="1224" y="10" width="165" height="49" filter="url(#fire)" />
          <polygon points="1395,59 1420,25 1440,10 1440,59" fill="#1c2230" />
        </Wallpaper>
        <Dock>
          {dock.map(({ I, dot, badge, l }, i) => (
            <Slot key={i}><I />{badge && <Badge $l={l}>{badge}</Badge>}{dot && <Dot />}</Slot>
          ))}
          <Sep />
          <Slot><FileDoc /></Slot>
          <Slot><Trash /></Slot>
        </Dock>
      </Desktop>
    </Screen>
  );
}
